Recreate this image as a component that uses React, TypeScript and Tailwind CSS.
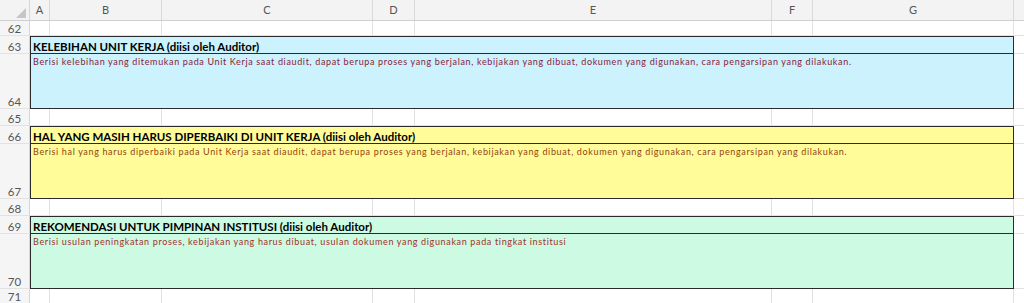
import React from "react";

// column widths A..G, H takes the rest
const COLS = ["A", "B", "C", "D", "E", "F", "G"];
const GRID = "grid grid-cols-[30px_20px_112px_211px_42px_357px_41px_201px_1fr]";

interface Section {
    titleRow: number;
    bodyRow: number;
    title: string;
    body: string;
    fill: string;
    textColor: string;
}

const sections: Section[] = [
    {
        titleRow: 63,
        bodyRow: 64,
        title: "KELEBIHAN UNIT KERJA (diisi oleh Auditor)",
        body: "Berisi kelebihan yang ditemukan pada Unit Kerja saat diaudit, dapat berupa proses yang berjalan, kebijakan yang dibuat, dokumen yang digunakan, cara pengarsipan yang dilakukan.",
        fill: "bg-[#cbf2fd]",
        textColor: "text-[#8a1a3a]",
    },
    {
        titleRow: 66,
        bodyRow: 67,
        title: "HAL YANG MASIH HARUS DIPERBAIKI DI UNIT KERJA (diisi oleh Auditor)",
        body: "Berisi hal yang harus diperbaiki pada Unit Kerja saat diaudit, dapat berupa proses yang berjalan, kebijakan yang dibuat, dokumen yang digunakan, cara pengarsipan yang dilakukan.",
        fill: "bg-[#fffc99]",
        textColor: "text-[#96420e]",
    },
    {
        titleRow: 69,
        bodyRow: 70,
        title: "REKOMENDASI UNTUK PIMPINAN INSTITUSI (diisi oleh Auditor)",
        body: "Berisi usulan peningkatan proses, kebijakan yang harus dibuat, usulan dokumen yang digunakan pada tingkat institusi",
        fill: "bg-[#cdfae3]",
        textColor: "text-[#a0312b]",
    },
];

function RowHead({ n }: { n: number }) {
    return (
        <div className="bg-[#f5f5f5] border-r border-[#d6d6d6] border-b border-b-[#e2e2e2] flex items-end justify-center pb-[1px] text-[11.5px] leading-none text-[#555]">
            {n}
        </div>
    );
}

function EmptyRow({ n, h }: { n: number; h: string }) {
    return (
        <div className={`${GRID} ${h}`}>
            <RowHead n={n} />
            {COLS.map((c) => (
                <div key={c} className="bg-white border-r border-b border-[#e1e1e1]" />
            ))}
            <div className="bg-white border-b border-[#e1e1e1]" />
        </div>
    );
}

function SectionBlock({ s }: { s: Section }) {
    return (
        <>
            <div className={`${GRID} h-[18px]`}>
                <RowHead n={s.titleRow} />
                <div className={`col-span-7 ${s.fill} border border-[#2b2b2b] flex items-end pl-[2px] pb-[1px] font-bold text-[11.5px] leading-none text-black`}>
                    {s.title}
                </div>
                <div className="bg-white border-b border-[#e1e1e1]" />
            </div>
            <div className={`${GRID} h-[55px]`}>
                <RowHead n={s.bodyRow} />
                <div className={`col-span-7 ${s.fill} border-x border-b border-[#2b2b2b] pl-[2px] pt-[3px] text-[9px] leading-none tracking-[0.65px] ${s.textColor}`}>
                    {s.body}
                </div>
                <div className="bg-white border-b border-[#e1e1e1]" />
            </div>
        </>
    );
}

export default function App() {
    return (
        <div className="w-[1024px] h-[303px] overflow-hidden bg-white font-['Lato','Liberation_Sans',sans-serif]">
            <div className={`${GRID} h-[21px] bg-[#f3f3f3] border-b border-[#cfcfcf]`}>
                <div className="relative border-r border-[#d6d6d6]">
                    <svg className="absolute right-[3px] bottom-[2px]" width="10" height="10" viewBox="0 0 10 10">
                        <polygon points="10,0 10,10 0,10" fill="#c6c6c6" />
                    </svg>
                </div>
                {COLS.map((c) => (
                    <div key={c} className="border-r border-[#dadada] flex items-center justify-center text-[11px] text-[#555]">
                        {c}
                    </div>
                ))}
                <div />
            </div>
            <EmptyRow n={62} h="h-[15px]" />
            <SectionBlock s={sections[0]} />
            <EmptyRow n={65} h="h-[17px]" />
            <SectionBlock s={sections[1]} />
            <EmptyRow n={68} h="h-[17px]" />
            <SectionBlock s={sections[2]} />
            <EmptyRow n={71} h="h-[15px]" />
        </div>
    );
}
